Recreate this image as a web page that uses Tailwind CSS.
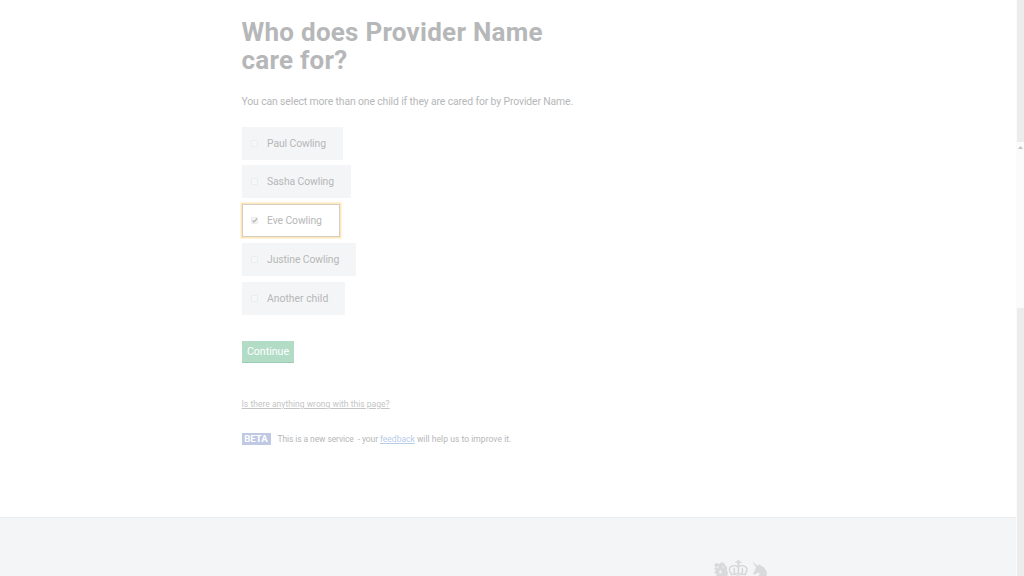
<!DOCTYPE html>
<html lang="en">
<head>
<meta charset="utf-8">
<title>Who does Provider Name care for?</title>
<script src="https://cdn.jsdelivr.net/npm/@tailwindcss/browser@4"></script>
</head>
<body class="h-[576px] overflow-hidden bg-white font-['Roboto',sans-serif] text-[#b6b7b8]">
<div class="flex h-[576px]">
  <div class="flex min-w-0 flex-1 flex-col">
    <main class="flex h-[517px] shrink-0 flex-col items-start pl-[241.5px] pt-[18px] whitespace-nowrap">
      <h1 class="text-[26px] font-bold leading-7 tracking-[0.26px]">Who does Provider Name<br>care for?</h1>
      <p class="mt-[21px] text-[10.4px] leading-[14px] tracking-[-0.12px]">You can select more than one child if they are cared for by Provider Name.</p>
      <div class="mt-[17.6px] flex flex-col items-start gap-[5.8px] text-[10.4px] leading-[14px] tracking-[-0.1px]">
        <label class="flex h-[33px] w-[101px] items-center gap-[9px] bg-[#f4f5f6] pl-[9px]"><i class="size-[7px] rounded-[1px] border border-[#ebecec] bg-[#f6f7f7]"></i><span class="pl-[.5px] pt-px">Paul Cowling</span></label>
        <label class="flex h-[33px] w-[109px] items-center gap-[9px] bg-[#f4f5f6] pl-[9px]"><i class="size-[7px] rounded-[1px] border border-[#ebecec] bg-[#f6f7f7]"></i><span class="pl-[.5px] pt-px">Sasha Cowling</span></label>
        <label class="flex h-[33px] w-[98px] items-center gap-[9px] border border-[#d3cec7] bg-white pl-[8px] ring-[1.500px] ring-[#ffe7b8]"><i class="flex size-[7px] rounded-[1px] border border-[#ebebeb] bg-[#f5f5f5]"><svg class="size-[5px] overflow-visible" viewBox="0 0 5 5" fill="none" stroke="#b4b4b4" stroke-width="1.2"><path d="M.5 2.500 2 4 5 .5"/></svg></i><span class="pl-[.5px] pt-px">Eve Cowling</span></label>
        <label class="flex h-[33px] w-[114px] items-center gap-[9px] bg-[#f4f5f6] pl-[9px]"><i class="size-[7px] rounded-[1px] border border-[#ebecec] bg-[#f6f7f7]"></i><span class="pl-[.5px] pt-px">Justine Cowling</span></label>
        <label class="flex h-[33px] w-[103px] items-center gap-[9px] bg-[#f4f5f6] pl-[9px]"><i class="size-[7px] rounded-[1px] border border-[#ebecec] bg-[#f6f7f7]"></i><span class="pl-[.5px] pt-px tracking-[0]">Another child</span></label>
      </div>
      <button class="mt-[26.100px] h-[22px] w-[52.900px] border-b border-[#9ecbb3] bg-[#b2dcc6] text-center text-[10.6px] leading-[21px] text-white">Continue</button>
      <a class="mt-[35px] text-[8.5px] leading-[12px] tracking-[0.03px] text-[#c4c5c6] underline">Is there anything wrong with this page?</a>
      <div class="mt-[23px] flex h-[13px] items-center text-[8.5px]">
        <strong class="flex h-3 w-[29px] items-center justify-center bg-[#bfc9e3] text-[9.600px] text-white">BETA</strong>
        <p class="ml-[7px]"><span class="tracking-[-0.1px]">This is a new service&nbsp; - your </span><a class="text-[#b9cce8] underline">feedback</a><span class="tracking-[0.04px]"> will help us to improve it.</span></p>
      </div>
    </main>
    <footer class="flex h-[59px] border-t border-[#ebedee] bg-[#f4f5f6] pl-[713px] pt-[42px]">
      <svg class="h-[17px] w-[56px]" viewBox="0 0 56 17" fill="#d8dadb">
        <path d="M1 5 3 3l4 1 1-2 3 1 1 2 2 2v3l1 3-1 4H2l2-3-3-1 2-3-2-1 2-2z"/>
        <path d="m4 6 2 1-2 1zm3 4 2 2-2 2-1-2zm3-4 1 2-2-1z" fill="#f4f5f6"/>
        <path d="M24.400 0h2v1.500h2v1.500h-2v2h-2V3h-2V1.500h2z"/>
        <g fill="none" stroke="#d3d5d6" stroke-width="1.400"><path d="M18.500 14c-6-7 2-10 6.500-7 4.500-3 13 0 7 7M25.400 5v9M21.500 8c-1 2-.5 4 .5 6M29 8c1 2 .5 4-.5 6"/><path d="M18 14.700c4-1 10-1 15 0M19 17c4-1 9-1 13 0"/></g>
        <path d="m39.200 1.500 5.300 4.200 2.500-1.700.8 1.800 2.700 1.200 1.500 2 1.500 2 .5 2-.5 2 1 2H45l1.500-3-.5-1.500-3 1-1.500 1.500-1.500-1.200 2-3.800 1-2.500z"/>
      </svg>
    </footer>
  </div>
  <aside class="flex w-2 flex-col bg-[#fbfbfb] pl-px">
    <div class="h-[142px] bg-[#ececec]"></div>
    <svg class="mt-[4px] h-[3px] w-[5px] self-center" viewBox="0 0 5 3" fill="#c4c4c4"><path d="M0 3 2.500 0 5 3z"/></svg>
    <div class="mt-[159px] flex-1 bg-[#ececec]"></div>
  </aside>
</div>
</body>
</html>
